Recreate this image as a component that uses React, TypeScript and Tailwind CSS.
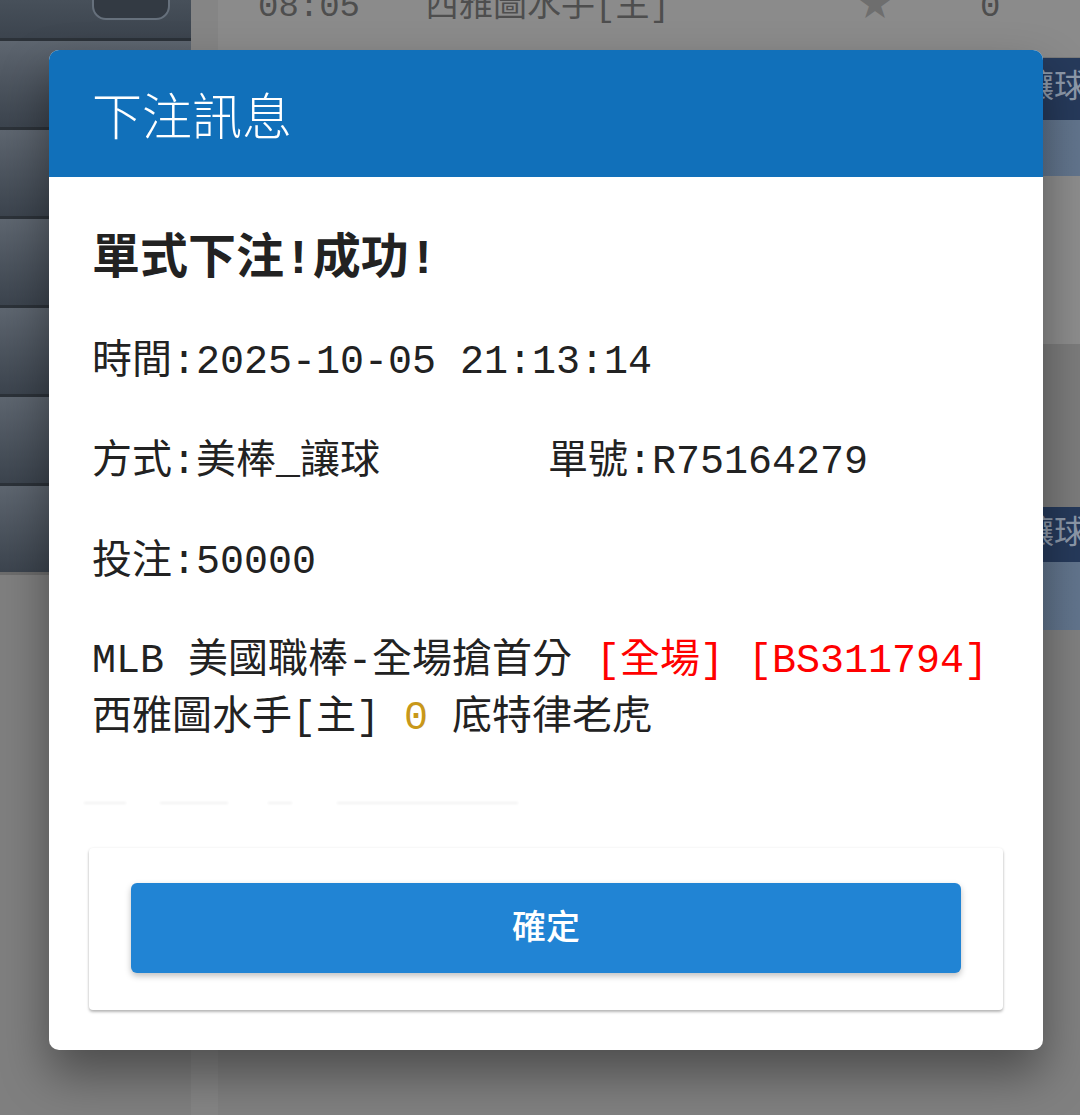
const mono = "font-['Liberation_Mono','Noto_Sans_CJK_TC',monospace]";

function SideTile() {
  return <div className="h-[89px] shrink-0 border-t-[3px] border-[#2c3239] bg-linear-to-b from-[#5e6670] to-[#3c444e]" />;
}

function Backdrop() {
  return (
    <div className="flex h-full">
      {/* sidebar */}
      <div className="flex w-[191px] shrink-0 flex-col">
        <div className="relative h-[38px] shrink-0 bg-linear-to-b from-[#47505a] to-[#3c444e]">
          <div className="absolute left-[92px] top-[-40px] h-[60px] w-[78px] rounded-[14px] border-2 border-[#66707c] bg-[#333a43]" />
        </div>
        <SideTile />
        <SideTile />
        <SideTile />
        <SideTile />
        <SideTile />
        <SideTile />
        <div className="flex-1 border-t-[3px] border-[#6c6c6c] bg-[#7f7f7f]" />
      </div>
      <div className="w-[27px] shrink-0 bg-[#858585]" />
      {/* page content */}
      <div className={`flex min-w-0 flex-1 flex-col bg-[#8a8a8a] ${mono}`}>
        <div className="-mt-[42px] flex h-[100px] shrink-0 items-center whitespace-nowrap border-b border-[#7a7a7a] bg-[#8b8b8b] text-[34px] text-[#4e4e4e]">
          <span className="ml-[40px] w-[167px] shrink-0">08:05</span>
          <span className="w-[433px] shrink-0">西雅圖水手[主]</span>
          <span className="w-[122px] shrink-0 text-[#6e6e6e]">★</span>
          <span>0</span>
        </div>
        <div className="flex h-[62px] shrink-0 items-center whitespace-nowrap bg-[#263a5b] pl-[804px] text-[32px] text-[#8d99aa]">讓球</div>
        <div className="h-[56px] shrink-0 bg-linear-to-r from-[#566a84] to-[#62758d]" />
        <div className="h-[168px] shrink-0 bg-[#8d8d8d]" />
        <div className="h-[163px] shrink-0 bg-[#7c7c7c]" />
        <div className="flex h-[55px] shrink-0 items-center whitespace-nowrap bg-[#263a5b] pl-[804px] text-[32px] text-[#8d99aa]">讓球</div>
        <div className="h-[68px] shrink-0 bg-linear-to-r from-[#566a84] to-[#62758d]" />
        <div className="flex-1 border-t-[3px] border-[#808080] bg-[#808080]" />
      </div>
    </div>
  );
}

export default function App() {
  return (
    <div className="relative h-[1115px] w-[1080px] overflow-hidden bg-[#808080]">
      <Backdrop />

      {/* dialog */}
      <div className="absolute left-[49px] top-[50px] flex h-[1000px] w-[994px] flex-col overflow-hidden rounded-[10px] bg-white shadow-[0_24px_48px_rgba(0,0,0,0.4)]">
        <div className="flex h-[127px] shrink-0 items-center bg-[#1170ba] px-[43px] font-['Noto_Sans_CJK_TC',sans-serif] text-[50px] font-light text-white">
          下注訊息
        </div>

        <div className={`px-[43px] pt-[52px] text-[#222] ${mono}`}>
          <div className="text-[48px] font-bold leading-[62px]">單式下注!成功!</div>
          <div className="mt-[42px] text-[40px] leading-[60px]">時間:2025-10-05 21:13:14</div>
          <div className="mt-[40px] flex text-[40px] leading-[60px]">
            <span className="w-[456px]">方式:美棒_讓球</span>
            <span>單號:R75164279</span>
          </div>
          <div className="mt-[40px] text-[40px] leading-[60px]">投注:50000</div>
          <div className="mt-[40px] text-[40px] leading-[57px]">
            MLB 美國職棒-全場搶首分 <span className="text-[#f00]">[全場]</span> <span className="text-[#f00]">[BS311794]</span>
            <br />
            西雅圖水手[主] <span className="text-[#c8981a]">0</span> 底特律老虎
          </div>
          <div className="-ml-[8px] mt-[54px] flex h-[3px] items-center">
            <div className="h-[2px] w-[42px] bg-[#f1f1f1] blur-[1px]" />
            <div className="ml-[34px] h-[2px] w-[68px] bg-[#f1f1f1] blur-[1px]" />
            <div className="ml-[40px] h-[2px] w-[24px] bg-[#f1f1f1] blur-[1px]" />
            <div className="ml-[45px] h-[2px] w-[181px] bg-[#f1f1f1] blur-[1px]" />
          </div>
        </div>

        <div className="px-[40px] pt-[44px]">
          <div className="rounded-[4px] bg-white px-[42px] pb-[37px] pt-[35px] shadow-[0_2px_3px_rgba(0,0,0,0.28),0_0_3px_rgba(0,0,0,0.06)]">
            <button className="flex h-[90px] w-full items-center justify-center rounded-[6px] bg-[#2184d4] pb-[8px] font-['Noto_Sans_CJK_TC',sans-serif] text-[34px] font-medium text-white shadow-[0_3px_6px_rgba(0,0,0,0.25)]">
              確定
            </button>
          </div>
        </div>
      </div>
    </div>
  );
}
